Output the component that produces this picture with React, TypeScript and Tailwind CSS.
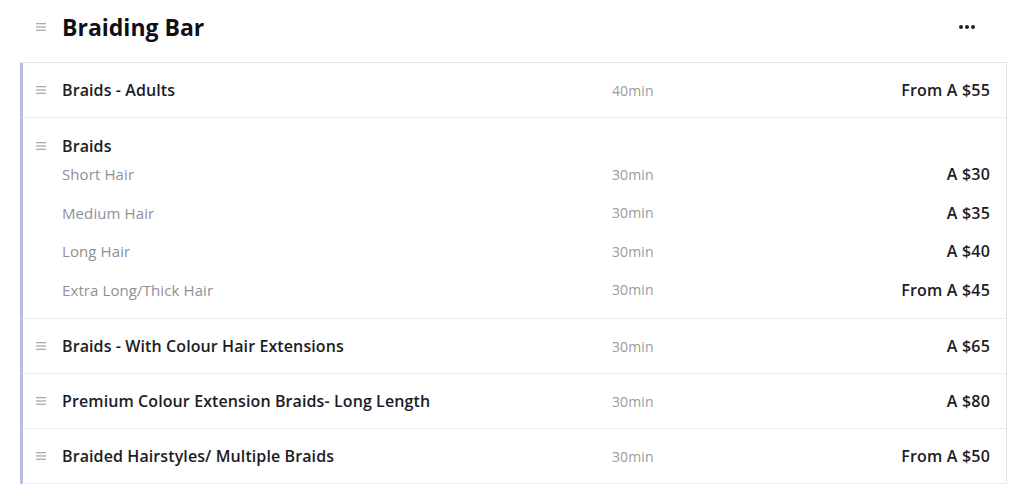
import React from "react";

function Handle() {
  return (
    <svg width="10" height="8" viewBox="0 0 10 8" className="shrink-0">
      <rect x="0" y="0" width="10" height="1.3" fill="#a7a9b4" />
      <rect x="0" y="3.3" width="10" height="1.3" fill="#a7a9b4" />
      <rect x="0" y="6.6" width="10" height="1.3" fill="#a7a9b4" />
    </svg>
  );
}

type Row = { name: string; dur: string; price: string };

const rows: Row[] = [
  { name: "Braids - Adults", dur: "40min", price: "From A $55" },
];
const subs: Row[] = [
  { name: "Short Hair", dur: "30min", price: "A $30" },
  { name: "Medium Hair", dur: "30min", price: "A $35" },
  { name: "Long Hair", dur: "30min", price: "A $40" },
  { name: "Extra Long/Thick Hair", dur: "30min", price: "From A $45" },
];
const rest: Row[] = [
  { name: "Braids - With Colour Hair Extensions", dur: "30min", price: "A $65" },
  { name: "Premium Colour Extension Braids- Long Length", dur: "30min", price: "A $80" },
  { name: "Braided Hairstyles/ Multiple Braids", dur: "30min", price: "From A $50" },
];

function MainRow({ r }: { r: Row }) {
  return (
    <div className="flex h-[55px] items-center border-b border-[#ececf0] border-l-[3px] border-l-[#b3bbe6]">
      <div className="w-[13px]" />
      <Handle />
      <div className="w-[16px]" />
      <div className="w-[550px] text-[16px] font-semibold tracking-[0.1px] text-[#1c1c24]">{r.name}</div>
      <div className="flex-1 text-[14px] tracking-[0.1px] text-[#999aa2]">{r.dur}</div>
      <div className="pr-[16px] text-[16px] font-semibold tracking-[0.2px] text-[#1c1c24]">{r.price}</div>
    </div>
  );
}

export default function App() {
  return (
    <div
      className="h-[499px] w-[1024px] bg-white"
      style={{ fontFamily: "'Open Sans', sans-serif" }}
    >
      <div className="flex h-[62px] items-center pl-[36px] pr-[49px] pb-[8px]">
        <Handle />
        <div className="ml-[16px] flex-1 pt-[1px] text-[23px] font-bold text-[#101014]">Braiding Bar</div>
        <div className="flex gap-[2px]">
          <span className="h-[4px] w-[4px] rounded-full bg-[#22232a]" />
          <span className="h-[4px] w-[4px] rounded-full bg-[#22232a]" />
          <span className="h-[4px] w-[4px] rounded-full bg-[#22232a]" />
        </div>
      </div>
      <div className="ml-[20px] w-[987px] border-r border-t border-[#e3e3e8]">
        {rows.map((r) => (
          <MainRow key={r.name} r={r} />
        ))}
        <div className="border-b border-[#ececf0] border-l-[3px] border-l-[#b3bbe6] pb-[9px]">
          <div className="flex h-[54px] items-center pt-[1px]">
            <div className="w-[13px]" />
            <Handle />
            <div className="w-[16px]" />
            <div className="flex-1 text-[16px] font-semibold tracking-[0.1px] text-[#1c1c24]">Braids</div>
          </div>
          {subs.map((s, i) => (
            <div
              key={s.name}
              className={`flex items-center h-[38.5px] ${i === 0 ? "-mt-[17px]" : ""}`}
            >
              <div className="w-[39px]" />
              <div className="w-[550px] text-[15px] tracking-[0.1px] text-[#8f9098]">{s.name}</div>
              <div className="flex-1 text-[14px] tracking-[0.1px] text-[#999aa2]">{s.dur}</div>
              <div className="pr-[16px] text-[16px] font-semibold tracking-[0.2px] text-[#1c1c24]">{s.price}</div>
            </div>
          ))}
        </div>
        {rest.map((r) => (
          <MainRow key={r.name} r={r} />
        ))}
      </div>
    </div>
  );
}
